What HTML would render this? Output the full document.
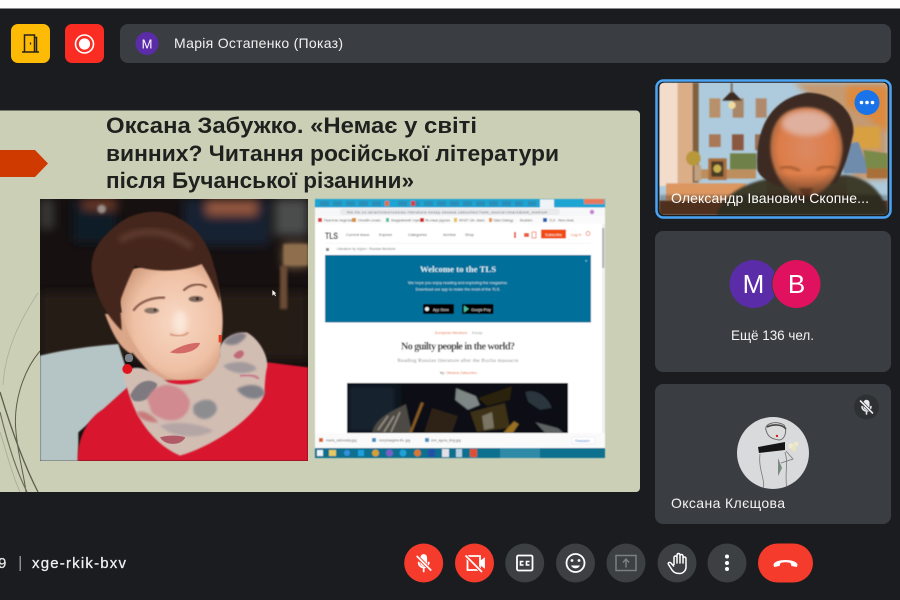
<!DOCTYPE html>
<html lang="uk"><head><meta charset="utf-8"><title>Meet</title>
<style>
html,body{margin:0;padding:0;width:900px;height:600px;overflow:hidden;background:#1a1c20}
svg{display:block;position:absolute;left:0;top:0}
text{font-family:"Liberation Sans",sans-serif}
</style></head><body>
<svg xmlns="http://www.w3.org/2000/svg" width="900" height="600" viewBox="0 0 900 600">
<defs>
<filter id="b1" x="-10%" y="-10%" width="120%" height="120%"><feGaussianBlur stdDeviation="2"/></filter>
<filter id="b2" x="-20%" y="-20%" width="140%" height="140%"><feGaussianBlur stdDeviation="4"/></filter>
<filter id="b3" x="-30%" y="-30%" width="160%" height="160%"><feGaussianBlur stdDeviation="8"/></filter>
<filter id="b4" x="-40%" y="-40%" width="180%" height="180%"><feGaussianBlur stdDeviation="14"/></filter>
<filter id="s" x="-5%" y="-5%" width="110%" height="110%"><feGaussianBlur stdDeviation=".4"/></filter>
<clipPath id="ph"><rect x="0" y="0" width="804" height="786"/></clipPath>
<clipPath id="vid"><rect x="58" y="38" width="685" height="397" rx="15"/></clipPath>
<clipPath id="burn"><rect x="347" y="383" width="221" height="50"/></clipPath>
<clipPath id="av"><circle cx="773" cy="453" r="36"/></clipPath>
<radialGradient id="skin" cx=".55" cy=".5" r=".6"><stop offset="0" stop-color="#f8d8c4"/><stop offset=".7" stop-color="#efc0a4"/><stop offset="1" stop-color="#d09a7c"/></radialGradient>
<radialGradient id="head" cx=".5" cy=".45" r=".6"><stop offset="0" stop-color="#dc8a62"/><stop offset=".65" stop-color="#dd7c48"/><stop offset="1" stop-color="#8a5a38"/></radialGradient>
<linearGradient id="shade" x1="0" x2="0" y1="0" y2="1"><stop offset="0" stop-color="#3a2a1e" stop-opacity="0"/><stop offset="1" stop-color="#3a2a1e" stop-opacity=".75"/></linearGradient>
</defs>

<rect width="900" height="600" fill="#1a1c20"/>
<rect width="900" height="8" fill="#fff"/>
<rect y="8" width="900" height="1" fill="#8a8b8d"/>

<!-- top row -->
<rect x="11" y="24" width="39" height="39" rx="7" fill="#fdbb05"/>
<g fill="none" stroke="#26221a" stroke-width="1.500">
<path d="M22 52H39"/><path d="M24.500 52V35H34.500V52"/><path d="M34.500 37.500H36.500V52"/>
<path d="M30.500 42.500V44.500" stroke-width="1.300"/>
</g>
<rect x="65" y="24" width="39" height="39" rx="7" fill="#fb2c22"/>
<circle cx="84.500" cy="44" r="9" fill="none" stroke="#fff" stroke-width="1.600"/>
<circle cx="84.500" cy="44" r="5.600" fill="#fff"/>
<rect x="120" y="24" width="771" height="39" rx="8" fill="#3a3e42"/>
<circle cx="147" cy="43.500" r="11.500" fill="#5b2ca8"/>
<text x="147" y="48.500" font-size="13" fill="#fff" text-anchor="middle">M</text>
<text x="174" y="48" font-size="14" fill="#f1f1f1" textLength="169" lengthAdjust="spacing">Марія Остапенко (Показ)</text>

<!-- slide -->
<path d="M0 110.500H636a4 4 0 0 1 4 4V488a4 4 0 0 1-4 4H0Z" fill="#cbcfb6"/>
<g fill="none">
<path d="M38 293C20 320 5 350 3 385" stroke="#adae98" stroke-width=".8"/>
<path d="M40 351C22 372 13 405 16 432C18 455 24 475 26 492" stroke="#5c5b48" stroke-width="1"/>
<path d="M0 392C10 425 24 465 38 492" stroke="#5f5e4c" stroke-width="1.300"/>
<path d="M0 412C8 445 16 470 27 492" stroke="#6f6e5a" stroke-width="1.200"/>
<path d="M0 432C6 450 12 475 20 492" stroke="#a8a994" stroke-width=".8"/>
</g>
<polygon points="0,150 35,150 48,163.500 35,177 0,177" fill="#cf3a00"/>
<g font-weight="700" font-size="22.500" fill="#1f211f">
<text x="106" y="133" textLength="371" lengthAdjust="spacingAndGlyphs">Оксана Забужко. «Немає у світі</text>
<text x="106" y="161" textLength="453" lengthAdjust="spacingAndGlyphs">винних? Читання російської літератури</text>
<text x="106" y="188" textLength="308" lengthAdjust="spacingAndGlyphs">після Бучанської різанини»</text>
</g>

<!-- photo -->
<g transform="translate(40,199) scale(.33333)" clip-path="url(#ph)">
<rect width="804" height="786" fill="#161010"/>
<g filter="url(#b4)">
<rect x="0" y="0" width="40" height="90" fill="#3a3a38"/>
<rect x="100" y="0" width="130" height="130" fill="#0f1d28"/>
<rect x="130" y="0" width="100" height="30" fill="#6e3a28"/>
<rect x="430" y="0" width="260" height="140" fill="#122230"/>
<rect x="500" y="5" width="150" height="42" fill="#96583f"/>
<rect x="705" y="0" width="99" height="110" fill="#4c4e4e"/>
<rect x="730" y="135" width="74" height="70" fill="#86684a"/>
<rect x="0" y="280" width="804" height="200" fill="#261c18"/>
</g>
<circle cx="185" cy="30" r="13" fill="#9a908a" filter="url(#b2)"/>
<rect x="720" y="200" width="22" height="130" fill="#6a4c34" filter="url(#b2)"/>
<rect x="730" y="135" width="74" height="65" fill="#8e6e4e" filter="url(#b2)"/>
<path d="M0 470C80 450 170 440 235 435L275 560 115 700V786H0Z" fill="#b5c5c5" filter="url(#b1)"/>
<path d="M113 786C112 720 140 660 190 630L262 565 685 490 804 505V786Z" fill="#d8142e" filter="url(#b1)"/>
<path d="M250 430L540 400 545 540 350 545Z" fill="#dca68a" filter="url(#b1)"/>
<path d="M195 345C215 400 240 450 275 465L300 400 250 340Z" fill="#dca688" filter="url(#b1)"/>
<path d="M250 215C230 290 240 360 280 430C310 480 350 530 410 542C460 545 510 525 530 490C545 430 552 380 546 330C540 270 520 215 490 190L380 190Z" fill="url(#skin)" filter="url(#b1)"/>
<path d="M245 395C200 350 165 290 155 215C150 150 190 110 240 70C290 35 370 25 420 60C480 90 510 150 520 195C535 240 540 270 540 310C525 270 505 225 485 195C440 215 350 225 285 200C265 240 245 290 240 310C240 340 245 370 245 395Z" fill="#44261d" filter="url(#b1)"/>
<path d="M240 125C290 90 380 85 455 145" stroke="#5e3a2e" stroke-width="20" fill="none" filter="url(#b3)"/>
<path d="M280 335C300 305 340 295 375 296" stroke="#7a5040" stroke-width="6" fill="none" filter="url(#b1)"/>
<path d="M430 275C450 255 480 250 500 265" stroke="#7a5040" stroke-width="6" fill="none" filter="url(#b1)"/>
<ellipse cx="335" cy="335" rx="22" ry="9" fill="#8a7468" filter="url(#b1)"/>
<ellipse cx="468" cy="300" rx="22" ry="9" fill="#7a6458" filter="url(#b1)"/>
<circle cx="345" cy="333" r="5" fill="#5a4a42"/>
<circle cx="472" cy="299" r="5" fill="#4a3a32"/>
<ellipse cx="420" cy="370" rx="20" ry="36" fill="#fbe6d8" filter="url(#b3)"/>
<path d="M390 405C405 412 430 415 445 400" stroke="#cf9276" stroke-width="5" fill="none" filter="url(#b1)"/>
<path d="M390 460C420 440 455 430 480 432C475 455 430 470 390 460Z" fill="#d46a66" filter="url(#s)"/>
<path d="M250 530C280 480 340 520 385 550C450 570 530 540 540 470C530 430 570 400 620 400C660 420 690 480 680 510C670 560 680 590 660 610C620 670 520 740 420 770C350 740 290 670 262 570Z" fill="#d2bdb2" filter="url(#b1)"/>
<path d="M270 590C290 545 330 535 352 555C345 590 310 615 280 605Z" fill="#7e7a80" filter="url(#b1)"/>
<path d="M322 600C345 540 430 545 450 610C445 670 380 680 335 640Z" fill="#d08a90" filter="url(#b2)"/>
<path d="M290 640C310 630 340 650 355 670 330 670 300 665 290 640Z" fill="#c87a7a" filter="url(#b2)"/>
<path d="M460 620C490 590 535 600 530 635C515 665 480 670 460 640Z" fill="#8d8d90" filter="url(#b2)"/>
<path d="M360 680C400 665 470 670 520 695 480 720 400 720 360 680Z" fill="#b4a6a4" filter="url(#b2)"/>
<path d="M550 430C575 400 610 395 620 410C600 440 570 445 550 430Z" fill="#858088" filter="url(#b2)"/>
<path d="M590 570C630 550 670 555 675 585C650 610 610 600 590 570Z" fill="#808088" filter="url(#b2)"/>
<path d="M550 500C590 480 640 490 650 510 620 530 570 525 550 500Z" fill="#a29a9c" filter="url(#b2)"/>
<path d="M580 470C595 450 610 450 612 465C605 480 590 485 580 470Z" fill="#c06a78" filter="url(#b1)"/>
<path d="M360 715C380 708 420 708 436 715C425 740 375 742 360 715Z" fill="#b05a68" filter="url(#s)"/>
<path d="M600 530C625 525 650 530 655 540" stroke="#c88090" stroke-width="8" fill="none" filter="url(#b1)"/>
<circle cx="262" cy="510" r="15" fill="#e0141c"/>
<rect x="255" y="465" width="24" height="24" rx="9" fill="#7c8088" filter="url(#s)"/>
<rect x="536" y="408" width="9" height="22" fill="#e03818"/>
<path d="M697 273V290L702 286 706 292 708 290 704 284 709 283Z" fill="#f2f2f2"/>
</g>

<!-- browser screenshot -->
<g filter="url(#s)">
<rect x="315" y="199" width="290" height="259" fill="#fff"/>
<rect x="315" y="199" width="290" height="8.500" fill="#1ba4d2"/>
<g fill="#2a8fb8">
<rect x="320" y="201" width="9" height="5"/><rect x="333" y="201" width="9" height="5"/><rect x="346" y="201" width="9" height="5"/><rect x="359" y="201" width="9" height="5"/><rect x="372" y="201" width="9" height="5"/><rect x="398" y="201" width="9" height="5"/><rect x="411" y="201" width="9" height="5"/><rect x="424" y="201" width="9" height="5"/><rect x="437" y="201" width="9" height="5"/><rect x="450" y="201" width="9" height="5"/><rect x="463" y="201" width="9" height="5"/><rect x="476" y="201" width="9" height="5"/><rect x="489" y="201" width="9" height="5"/><rect x="502" y="201" width="9" height="5"/><rect x="515" y="201" width="8" height="5"/><rect x="528" y="201" width="8" height="5"/>
</g>
<rect x="385" y="201" width="4" height="5" fill="#ea6a3a"/><rect x="411" y="201" width="4" height="5" fill="#e03a3a"/>
<rect x="540" y="199.500" width="14" height="8" fill="#eef3f6"/>
<rect x="584" y="199" width="20" height="5" fill="#e8785a"/>
<rect x="315" y="207.500" width="290" height="8.500" fill="#f5f7f8"/>
<rect x="340" y="208.500" width="220" height="6.500" rx="3" fill="#e8eaec"/>
<text x="347" y="213.500" font-size="3.500" fill="#555" textLength="200">the-tls.co.uk/articles/russian-literature-essay-oksana-zabuzhko/?utm_source=share&amp;utm_medium</text>
<circle cx="592" cy="212" r="2.200" fill="#c57fd0"/>
<rect x="315" y="216" width="290" height="8" fill="#fafafa"/>
<g font-size="3.400" fill="#666">
<rect x="318" y="218" width="4" height="4" fill="#d84040"/><text x="324" y="221.500">Пам'ятки людства</text>
<rect x="352" y="218" width="4" height="4" fill="#d89030"/><text x="358" y="221.500">Онлайн словн.</text>
<rect x="386" y="218" width="3" height="4" fill="#50c0a0"/><text x="391" y="221.500">Академічний тлум.</text>
<rect x="420" y="218" width="4" height="4" fill="#d02020"/><text x="425" y="221.500">Як пише рідною</text>
<rect x="454" y="218" width="3" height="4" fill="#e8c040"/><text x="459" y="221.500">WHAT Ukr. islam.</text>
<rect x="489" y="218" width="3" height="4" fill="#e89040"/><text x="493" y="221.500">Talan Dialogy</text>
<text x="520" y="221.500">Bookten</text>
<rect x="543" y="218" width="4" height="4" fill="#2060b0"/><text x="549" y="221.500">TLS · New news</text>
</g>
<text x="325" y="239" font-size="9.500" font-weight="700" fill="#222" textLength="13" lengthAdjust="spacingAndGlyphs">TLS</text>
<g font-size="3.900" fill="#555">
<text x="346" y="236">Current Issue</text><text x="379" y="236">Explore</text><text x="408" y="236">Categories</text><text x="443" y="236">Archive</text><text x="465" y="236">Shop</text>
</g>
<rect x="514" y="232" width="2" height="6" fill="#e8603a"/>
<rect x="524" y="233" width="5" height="4" fill="#e8603a"/>
<rect x="532" y="232" width="4" height="6" fill="none" stroke="#e8603a" stroke-width=".7"/>
<rect x="541" y="229.500" width="25" height="9" fill="#f04c10"/>
<text x="553.500" y="236" font-size="3.800" fill="#fff" text-anchor="middle">Subscribe</text>
<text x="571" y="236" font-size="3.800" fill="#e8603a">Log in</text>
<circle cx="588" cy="233.500" r="2" fill="none" stroke="#e8603a" stroke-width=".7"/>
<rect x="325" y="243" width="266" height=".5" fill="#eee"/>
<text x="337" y="250" font-size="3.400" fill="#777">Literature by region   ›   Russian literature</text>
<rect x="326" y="248" width="3" height="3" fill="#888"/>
<rect x="325" y="255" width="266" height="67.500" fill="#00709a"/>
<text x="458" y="272" font-weight="700" font-size="8.600" fill="#d8f0f8" text-anchor="middle" style="font-family:'Liberation Serif',serif" textLength="76">Welcome to the TLS</text>
<text x="458" y="284" font-size="4" fill="#d0e8f0" text-anchor="middle">We hope you enjoy reading and exploring the magazine.</text>
<text x="458" y="290.500" font-size="4" fill="#d0e8f0" text-anchor="middle">Download our app to make the most of the TLS.</text>
<rect x="423" y="304" width="31" height="10" rx="1" fill="#050505"/>
<text x="441" y="311" font-size="3.600" fill="#eee" text-anchor="middle">App Store</text>
<circle cx="427" cy="309" r="2" fill="#eee"/>
<rect x="462" y="304" width="31.500" height="10" rx="1" fill="#050505"/>
<polygon points="464,305.500 469,309 464,312.500" fill="#46c0a0"/>
<text x="481" y="311" font-size="3.600" fill="#eee" text-anchor="middle">Google Play</text>
<text x="585" y="262" font-size="4" fill="#bfe">×</text>
<text x="435" y="334" font-size="3.800" fill="#e8703a">European literature</text>
<text x="472" y="334" font-size="3.800" fill="#999">Essay</text>
<text x="458" y="349.500" font-weight="700" font-size="10" fill="#1c1c1c" text-anchor="middle" style="font-family:'Liberation Serif',serif" textLength="114">No guilty people in the world?</text>
<text x="458" y="362" font-size="5.500" fill="#8a8a8a" text-anchor="middle" style="font-family:'Liberation Serif',serif" textLength="121">Reading Russian literature after the Bucha massacre</text>
<text x="440" y="374" font-size="3.800" fill="#666">By</text>
<text x="446" y="374" font-size="3.800" fill="#e8703a">Oksana Zabuzhko</text>
<rect x="347" y="383" width="221" height="50" fill="#0c0f13"/>
<g clip-path="url(#burn)">
<rect x="347" y="385" width="50" height="48" fill="#14222e" filter="url(#b2)"/>
<g filter="url(#s)">
<path d="M372 433C375 418 390 412 406 404L412 433Z" fill="#4e4a44"/>
<path d="M378 430L388 416M384 432L394 416M391 432L400 412" stroke="#a9a294" stroke-width="1.200"/>
<path d="M409 433L421 402 424 403 412 433Z" fill="#8a5c24"/>
<path d="M424 433L432 408 458 416 452 433Z" fill="#2e2412"/>
<path d="M456 388L476 396 480 405 468 410 455 400Z" fill="#7e8686"/>
<path d="M470 412L505 403 510 428 477 432Z" fill="#3e3218"/>
<path d="M478 398L512 386 510 400 487 406Z" fill="#2a2008"/>
<path d="M482 416L492 412 494 428 484 430Z" fill="#7a7462"/>
<path d="M503 433L514 421 519 424 513 433Z" fill="#987024"/>
<path d="M525 392C535 388 548 396 552 408L540 410 528 402Z" fill="#2a343e"/>
<path d="M535 422L558 428 564 433 545 433Z" fill="#5e6464"/>
</g>
</g>
<rect x="602" y="224" width="3" height="209" fill="#f0f0f0"/>
<rect x="602" y="228" width="2.500" height="40" fill="#b8b8b8"/>
<rect x="315" y="433" width="290" height="14.500" fill="#fafafa"/>
<g font-size="3.400" fill="#666">
<rect x="319" y="438" width="4" height="4" fill="#d86030"/><text x="326" y="441.500">maria_ostrovskiy.jpg</text>
<rect x="372" y="438" width="4" height="4" fill="#4090c0"/><text x="379" y="441.500">mcryhsayjem-fin-.jpg</text>
<rect x="425" y="438" width="4" height="4" fill="#4090c0"/><text x="431" y="441.500">mm_agora_biryj.jpg</text>
</g>
<rect x="572" y="437" width="23" height="7" rx="2" fill="#fff" stroke="#dde" stroke-width=".4"/>
<text x="575" y="442" font-size="3.400" fill="#4080d0">Показати</text>
<rect x="315" y="448" width="290" height="10" fill="#0f6f8e"/>
<rect x="500" y="448" width="40" height="10" fill="#2d8aa6"/>
<rect x="317" y="450" width="6" height="6" fill="#e8f4f8"/>
<rect x="329" y="450" width="7" height="6" fill="#e8c860"/>
<circle cx="347" cy="453" r="3" fill="#3090e0"/>
<rect x="358" y="450" width="6" height="6" fill="#1aa0e0"/>
<circle cx="375.500" cy="453" r="3.500" fill="#d8a030"/>
<circle cx="389.500" cy="453" r="3.500" fill="#7a60c8"/>
<circle cx="403" cy="453" r="3.500" fill="#20a0d8"/>
<circle cx="417.500" cy="453" r="3.500" fill="#d87830"/>
<rect x="428" y="449" width="7" height="8" fill="#2050a8"/>
<rect x="442" y="449" width="7" height="8" fill="#e0e0e8"/>
<rect x="456" y="449" width="6" height="8" fill="#b8d0e0"/>
<rect x="470" y="449" width="7" height="8" fill="#e05030"/>
</g>

<!-- video tile -->
<rect x="656.500" y="80.500" width="234" height="137" rx="7" fill="#1a1c20" stroke="#4aa4f6" stroke-width="2.500"/>
<g transform="translate(640,70) scale(.33333)" clip-path="url(#vid)">
<rect x="58" y="38" width="685" height="397" fill="#aecbdd"/>
<g filter="url(#b1)">
<path d="M460 38H743V330H640L600 150Z" fill="#c49a72" filter="url(#b3)"/>
<path d="M620 50H743V190C700 150 650 120 620 110Z" fill="#dd8a3c" filter="url(#b3)"/>
<path d="M640 170H720V235H640Z" fill="#d8a040" filter="url(#b2)"/>
<path d="M610 225L655 215 690 310H610Z" fill="#6f8cac"/>
<path d="M670 240L743 250V300H680Z" fill="#7a8a48"/>
<rect x="680" y="295" width="63" height="30" fill="#a87038"/>
<rect x="58" y="38" width="55" height="310" fill="#f3dccc"/>
<rect x="113" y="38" width="45" height="310" fill="#dcae88"/>
<rect x="158" y="38" width="18" height="300" fill="#80603e"/>
<rect x="208" y="85" width="33" height="58" fill="#b9906c"/>
<rect x="278" y="85" width="33" height="58" fill="#a88668"/>
<rect x="347" y="85" width="33" height="58" fill="#b08a6c"/>
<rect x="207" y="193" width="35" height="38" fill="#a87858"/>
<rect x="276" y="193" width="35" height="48" fill="#8a5840"/>
<rect x="345" y="193" width="25" height="48" fill="#9a7058"/>
<rect x="178" y="298" width="170" height="28" fill="#bd8f5e"/>
<rect x="270" y="250" width="80" height="48" fill="#6f8048"/>
<path d="M246 92L276 62 306 92Z" fill="#3a2a20"/>
<circle cx="276" cy="106" r="11" fill="#f0dca0"/>
<rect x="272" y="38" width="6" height="30" fill="#7a6a58"/>
<rect x="205" y="265" width="55" height="65" fill="#a87040"/>
<rect x="214" y="274" width="36" height="46" fill="#4a3a28"/>
<circle cx="232" cy="296" r="12" fill="#c8b050"/>
<circle cx="160" cy="265" r="22" fill="#b8983a"/>
<rect x="163" y="285" width="20" height="48" fill="#c0a080"/>
<rect x="78" y="340" width="240" height="60" fill="#dc9660"/>
<rect x="58" y="392" width="685" height="43" fill="#6a4028"/>
</g>
<path d="M230 435C250 375 310 340 390 325L620 315C680 325 730 360 743 435Z" fill="#3c3a2c" filter="url(#b2)"/>
<path d="M352 300C345 200 375 90 500 68C590 68 645 130 640 190C625 260 610 300 590 340L420 350C385 340 360 320 352 300Z" fill="#3e2c20" filter="url(#b1)"/>
<path d="M392 250C385 170 420 112 500 112C570 112 608 170 608 240C600 320 560 370 500 385C445 380 400 320 392 250Z" fill="url(#head)" filter="url(#b2)"/>
<ellipse cx="500" cy="160" rx="75" ry="38" fill="#dfb09e" filter="url(#b3)"/>
<path d="M420 295C440 285 465 295 480 303M530 300C550 285 575 288 590 296" stroke="#9a5428" stroke-width="6" fill="none" filter="url(#b2)"/>
<path d="M475 355L520 355 500 390Z" fill="#7a3c20" filter="url(#b2)"/>
<rect x="380" y="310" width="240" height="85" fill="url(#shade)"/>
<rect x="58" y="375" width="685" height="60" fill="#000" opacity=".25" filter="url(#b2)"/>
</g>
<circle cx="867" cy="102.500" r="12.500" fill="#1a73e8"/>
<g fill="#fff"><circle cx="861.500" cy="102.500" r="1.800"/><circle cx="867" cy="102.500" r="1.800"/><circle cx="872.500" cy="102.500" r="1.800"/></g>
<text x="671" y="203" font-size="14" fill="#fff" textLength="198" lengthAdjust="spacing">Олександр Іванович Скопне...</text>

<!-- tile 2 -->
<rect x="655" y="231" width="236" height="141" rx="8" fill="#3a3e42"/>
<circle cx="753.500" cy="284" r="24" fill="#5b2ca8"/>
<circle cx="796.500" cy="284" r="25" fill="#3a3e42"/>
<circle cx="796.500" cy="284" r="24" fill="#e0115f"/>
<text x="753.500" y="293" font-size="26" fill="#fff" text-anchor="middle">M</text>
<text x="796.500" y="293" font-size="26" fill="#fff" text-anchor="middle">B</text>
<text x="772.500" y="340" font-size="13.500" fill="#f4f4f4" text-anchor="middle" textLength="83">Ещё 136 чел.</text>

<!-- tile 3 -->
<rect x="655" y="384" width="236" height="140" rx="8" fill="#3a3e42"/>
<circle cx="866.500" cy="407" r="12.500" fill="#2e3134"/>
<g transform="translate(858.500,399)" fill="none" stroke="#e8eaed" stroke-width="1.600" stroke-linecap="round">
<path d="M8 1.500a2.200 2.200 0 0 0-2.200 2.200V8a2.200 2.200 0 0 0 4.400 0V3.700A2.200 2.200 0 0 0 8 1.500Z" fill="#e8eaed"/>
<path d="M3.500 7.500a4.500 4.500 0 0 0 9 0M8 12v3"/><path d="M2 2L14 14" stroke="#2e3134" stroke-width="3"/><path d="M2 2L14 14"/>
</g>
<circle cx="773" cy="453" r="36" fill="#d9dadb"/>
<g clip-path="url(#av)">
<path d="M766 430C764 424 775 420 784 425C788 432 784 440 779 440C773 439 768 438 766 430Z" fill="#dcdcdc" stroke="#6a6a6a" stroke-width="1"/>
<path d="M767 427C773 424 782 424 786 429" stroke="#444" stroke-width="1.600" fill="none"/>
<circle cx="777" cy="436" r="1.200" fill="#d42020"/>
<path d="M758 447L785 442 785 450 759 453Z" fill="#151515"/>
<path d="M760 454C758 470 766 480 763 490M785 452C789 465 784 472 787 490M786 451L793 459 781 463" fill="none" stroke="#777" stroke-width=".8"/>
<circle cx="791" cy="446" r="2.500" fill="#f0ecd0"/><circle cx="796" cy="444" r="2.500" fill="#ece8c8"/><circle cx="794" cy="449" r="2.500" fill="#e8e4c0"/>
<path d="M778 458L782 468 778 476Z" fill="#7a8a7c"/>
</g>
<text x="671" y="508" font-size="14" fill="#f4f4f4" textLength="114" lengthAdjust="spacing">Оксана Клєщова</text>

<!-- bottom -->
<text x="-2" y="568" font-size="15" fill="#e8e8e8" stroke="#e8e8e8" stroke-width=".25">9</text>
<rect x="19.500" y="556" width="1.500" height="15" fill="#8a8c90"/>
<text x="32" y="568" font-size="15" fill="#f1f1f1" stroke="#f1f1f1" stroke-width=".25" textLength="94" lengthAdjust="spacing">xge-rkik-bxv</text>

<circle cx="423.700" cy="563" r="19.500" fill="#f53c2c"/>
<g transform="translate(414.700,553)" fill="none" stroke="#fff" stroke-width="1.800" stroke-linecap="round">
<path d="M9 2a2.500 2.500 0 0 0-2.500 2.500V10a2.500 2.500 0 0 0 5 0V4.500A2.500 2.500 0 0 0 9 2Z" fill="#fff"/>
<path d="M4 9.500a5 5 0 0 0 10 0M9 15v3.500"/><path d="M2 3L16 17" stroke="#f53c2c" stroke-width="3.500"/><path d="M2.500 3.500L16 17"/>
</g>
<circle cx="474.500" cy="563" r="19.500" fill="#f53c2c"/>
<g fill="none" stroke="#fff" stroke-width="1.800">
<path d="M467.500 556H480V570H467.500Z"/><path d="M480 562L484 559V567L480 564" fill="#fff"/>
<path d="M465 555L482 572" stroke="#f53c2c" stroke-width="3.500"/><path d="M465.500 555.500L482 572"/>
</g>
<circle cx="524.700" cy="563" r="19.500" fill="#3c4043"/>
<rect x="517" y="555.500" width="15.500" height="15" rx="1.500" fill="none" stroke="#fff" stroke-width="1.800"/>
<path d="M523.500 561.500H520.500V565H523.500M529.500 561.500H526.500V565H529.500" fill="none" stroke="#fff" stroke-width="1.600"/>
<circle cx="575.500" cy="563" r="19.500" fill="#3c4043"/>
<circle cx="575.500" cy="563" r="9" fill="none" stroke="#fff" stroke-width="1.800"/>
<circle cx="572" cy="560.500" r="1.400" fill="#fff"/><circle cx="579" cy="560.500" r="1.400" fill="#fff"/>
<path d="M571 565.500a5 5 0 0 0 9 0Z" fill="#fff"/>
<circle cx="626" cy="563" r="19.500" fill="#3c4043"/>
<rect x="616" y="555.500" width="20" height="15" fill="none" stroke="#7b7e82" stroke-width="1.500"/>
<path d="M626 567.500V560M623 562.500L626 559 629 562.500" fill="none" stroke="#7b7e82" stroke-width="1.500"/>
<circle cx="677" cy="563" r="19.500" fill="#3c4043"/>
<path d="M674 565V557.500a1.500 1.500 0 0 1 3 0V563V555a1.500 1.500 0 0 1 3 0V563V556a1.500 1.500 0 0 1 3 0V563V558.500a1.500 1.500 0 0 1 3 0V567a6.500 6.500 0 0 1-6.500 6.500C675 573.500 673.500 572 672 570L668.500 564.500C667.500 563 669.500 561.500 671 563L674 566.500" fill="none" stroke="#fff" stroke-width="1.500" stroke-linejoin="round"/>
<circle cx="727" cy="563" r="19.500" fill="#3c4043"/>
<g fill="#fff"><circle cx="727" cy="556.500" r="2"/><circle cx="727" cy="563" r="2"/><circle cx="727" cy="569" r="2"/></g>
<rect x="758" y="543.500" width="55" height="39" rx="19.500" fill="#f53c2c"/>
<path d="M773.500 564.500C775 558.500 796 558.500 797.500 564.500L797 567L791.500 566L790.500 563C787 562 784 562 780.500 563L779.500 566L774 567Z" fill="#fff"/>
</svg>
</body></html>
